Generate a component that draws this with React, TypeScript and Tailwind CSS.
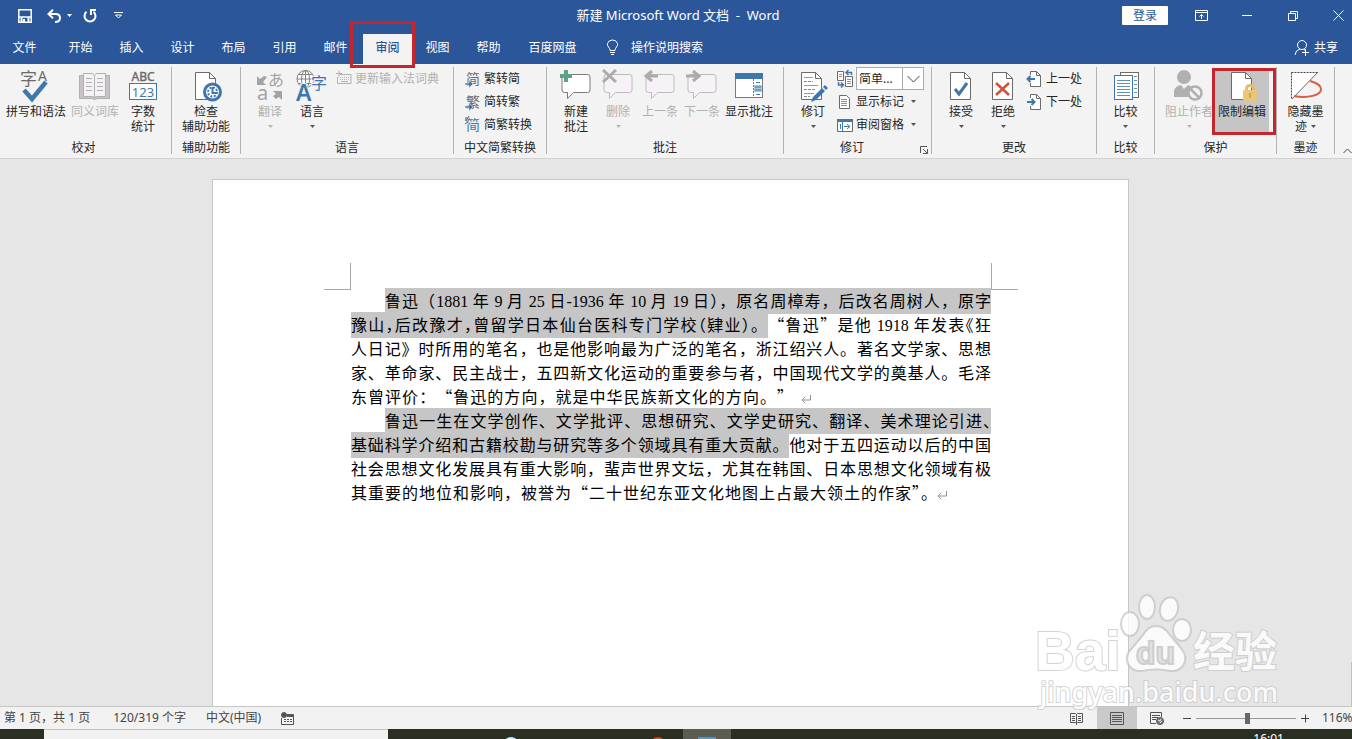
import type { ReactNode } from 'react';
import { clsx } from 'clsx';

const BLUE = '#3f77ad';
const GRAY = '#6b6b6b';
const MUTED = '#b1b1b1';

/* ---------- icons ---------- */

function Big({ children }: { children: ReactNode }) {
  return (
    <svg width="32" height="34" viewBox="0 0 32 34" fill="none" className="shrink-0 overflow-visible" aria-hidden="true">
      {children}
    </svg>
  );
}

function Small({ children }: { children: ReactNode }) {
  return (
    <svg width="16" height="16" viewBox="0 0 16 16" fill="none" className="shrink-0 overflow-visible" aria-hidden="true">
      {children}
    </svg>
  );
}

function Sheet() {
  return (
    <>
      <path d="M5.5 3.5h14l6 6v21h-20z" fill="#fff" stroke={GRAY} />
      <path d="M19.5 3.5v6h6" stroke={GRAY} />
    </>
  );
}

function SpellIcon() {
  return (
    <Big>
      <text x="0" y="16" fontSize="17" fill={GRAY}>字</text>
      <text x="18" y="12" fontSize="14" fill={GRAY}>A</text>
      <path d="M4 21l8 9 14-17" stroke={BLUE} strokeWidth="4.500" />
    </Big>
  );
}

function BookIcon() {
  return (
    <Big>
      <path d="M.5 6.500h4v-2h9l2 2 2-2h9v2h4v23h-12l-3 1-3-1h-12z" fill="#c9c3c9" stroke={MUTED} />
      <path d="M4.500 4.500h9l2 2v22l-2-1h-9zM26.500 4.500h-9l-2 2v22l2-1h9z" fill="#f6f1f6" stroke={MUTED} />
      <path d="M7 9.500h6M7 13.500h6M7 17.500h6M7 21.500h6M18 9.500h6M18 13.500h6M18 17.500h6M18 21.500h6" stroke={MUTED} />
    </Big>
  );
}

function CountIcon() {
  return (
    <Big>
      <text x="16" y="12" fontSize="12" textAnchor="middle" fill={GRAY} stroke={GRAY} strokeWidth="0.4">ABC</text>
      <rect x="2.500" y="14.500" width="27" height="16" fill="#fff" stroke={BLUE} />
      <text x="16" y="28" fontSize="13" textAnchor="middle" fill={BLUE}>123</text>
    </Big>
  );
}

function CheckAccessIcon() {
  return (
    <Big>
      <Sheet />
      <circle cx="22.500" cy="23" r="8" fill="#fff" stroke={BLUE} strokeWidth="3" />
      <circle cx="22.500" cy="23" r="4.500" stroke={BLUE} strokeWidth="2" strokeDasharray="2 1.500" />
      <path d="M22.500 18v6h5" stroke={BLUE} strokeWidth="2" />
    </Big>
  );
}

function TranslateIcon() {
  return (
    <Big>
      <path d="M3 7v9h9l-3-3 4-5-3-1-4 3z" fill="#a3a3a3" />
      <text x="14" y="17" fontSize="16" fill="#a3a3a3">あ</text>
      <text x="3" y="31" fontSize="20" fill="#a3a3a3">a</text>
      <path d="M19 22h9v9l-3-3-3 2-3-3 3-2z" fill="#a3a3a3" />
    </Big>
  );
}

function LanguageIcon() {
  return (
    <Big>
      <g stroke="#808080">
        <circle cx="9.500" cy="10" r="8.500" fill="#fff" />
        <ellipse cx="9.500" cy="10" rx="4" ry="8.500" />
        <path d="M1 10h17M2.500 5.500h14M2.500 14.500h14M9.500 1.500v17" />
      </g>
      <text x="0" y="32" fontSize="23" fontWeight="600" fill={BLUE} stroke="#f3f3f3" strokeWidth="2" style={{ paintOrder: 'stroke' }}>A</text>
      <text x="15" y="20" fontSize="16" fill={BLUE} stroke="#f3f3f3" strokeWidth="2" style={{ paintOrder: 'stroke' }}>字</text>
    </Big>
  );
}

function Balloon({ muted, children }: { muted?: boolean; children?: ReactNode }) {
  return (
    <Big>
      <path
        d="M4.500 5.500h23q2.500 0 2.500 2.500v13q0 2.500-2.500 2.500h-14l-6 6v-6h-3q-2.500 0-2.500-2.500v-13q0-2.500 2.500-2.500z"
        fill={muted ? '#f7f2f7' : '#fff'}
        stroke={muted ? '#bcbcbc' : '#7a7a7a'}
      />
      {children}
    </Big>
  );
}

function ShowCommentsIcon() {
  return (
    <Big>
      <rect x="2.500" y="4.500" width="27" height="24" fill="#fff" stroke="#7a7a7a" />
      <rect x="2" y="4" width="28" height="6" fill={BLUE} />
      <path d="M20.500 10v18" stroke="#7a7a7a" strokeDasharray="2 1" />
      <path d="M23 13.500h4M23 25.500h4" stroke={BLUE} />
      <path d="M21 16h8v7h-8z" fill="#a9c5e0" />
      <path d="M22 18h6M22 21h6" stroke={BLUE} />
    </Big>
  );
}

function TrackIcon() {
  return (
    <Big>
      <path d="M4.500 3.500h14l6 6v21h-20z" fill="#fff" stroke={GRAY} />
      <path d="M18.500 3.500v6h6" stroke={GRAY} />
      <path d="M7 8.500h9M7 16.500h14M7 24.500h10" stroke="#c58a75" />
      <path d="M7 12.500h9M7 20.500h12M7 27.500h6" stroke="#8a8a8a" strokeDasharray="3 1" />
      <path d="M14 33l2-5 9-9 3 3-9 9zM26 18l2-2 3 3-2 2z" fill={BLUE} />
    </Big>
  );
}

function AcceptIcon() {
  return (
    <Big>
      <Sheet />
      <path d="M10 20l4 5 8-11" stroke={BLUE} strokeWidth="3" />
    </Big>
  );
}

function RejectIcon() {
  return (
    <Big>
      <Sheet />
      <path d="M9 14l13 12M22 14L9 26" stroke="#cc5437" strokeWidth="2.500" />
    </Big>
  );
}

function CompareIcon() {
  return (
    <Big>
      <rect x="10.500" y="3.500" width="18" height="25" fill="#fff" stroke={GRAY} />
      <rect x="4.500" y="6.500" width="18" height="24" fill="#fff" stroke={BLUE} />
      <path d="M7 11.500h13M7 14.500h13M7 17.500h13M7 20.500h13M7 23.500h13M7 26.500h13" stroke="#5c93ab" />
      <path d="M24 7.500h3M24 11.500h3M24 15.500h3M24 19.500h3M24 23.500h3" stroke="#5c93ab" />
    </Big>
  );
}

function BlockAuthorsIcon() {
  return (
    <Big>
      <circle cx="11" cy="8" r="7" fill="#b0b0b0" />
      <path d="M1 28v-6q1-5 7-6l3 4 4-4q4 1 5 3l-5 9z" fill="#b0b0b0" />
      <circle cx="22" cy="24" r="6.500" fill="#f3f3f3" stroke="#b0b0b0" strokeWidth="2.500" />
      <path d="M17 19.500l9.500 9.500" stroke="#b0b0b0" strokeWidth="2.500" />
    </Big>
  );
}

function RestrictIcon() {
  return (
    <Big>
      <Sheet />
      <path d="M20.500 22v-2q0-3.500 3.500-3.500t3.500 3.500v2" stroke="#e3bd70" strokeWidth="3" />
      <rect x="17" y="21" width="14" height="12" rx="1" fill="#ebc57b" />
      <path d="M24 24v5" stroke="#d4a54f" strokeWidth="2" />
    </Big>
  );
}

function HideInkIcon() {
  return (
    <Big>
      <path d="M1 3h27L1 30z" fill="#fff" />
      <path d="M1.500 3.500h26M1.500 3.500v26" stroke="#444" strokeDasharray="2 1" />
      <path d="M28 3L2 30" stroke={GRAY} />
      <path d="M20 12q11 3 11 8 0 7-17 8-6 0-10-1" stroke="#cf6245" strokeWidth="2" />
    </Big>
  );
}

function ConvertIcon({ glyph, color, arrow = true }: { glyph: string; color: string; arrow?: boolean }) {
  return (
    <Small>
      <text x="1" y="13" fontSize="14" fill={color}>{glyph}</text>
      {arrow ? (
        <path d="M0 12h4v-3l4 4-4 4v-3H0z" fill={BLUE} stroke="#f3f3f3" strokeWidth="0.500" />
      ) : (
        <path d="M1 0v4M4-1l-3 5M0 7l3-2" stroke="#555" />
      )}
    </Small>
  );
}

function KeyboardIcon() {
  return (
    <Small>
      <path d="M4 3.500h11v9H1.500V6" stroke={MUTED} />
      <path d="M3-.5v6M0 2.500h6" stroke={MUTED} />
      <path d="M4 6.500h9M4 8.500h9" stroke={MUTED} strokeDasharray="1 1" />
      <path d="M5 10.500h7" stroke={MUTED} />
    </Small>
  );
}

function DisplayIcon() {
  return (
    <Small>
      <path d="M.5.5h6v9h-6zM8.500 5.500h7v10h-7z" fill="#fff" stroke={GRAY} />
      <path d="M2 3.500h3M2 5.500h3M10 8.500h4M10 10.500h4M10 12.500h4" stroke="#bd7d66" />
      <path d="M1.500 11v3h5M4 11.500L6.500 14 4 16.500M14.500 4V1.500H9M11.500-1L9 1.500 11.500 4" stroke={BLUE} strokeWidth="1.500" />
    </Small>
  );
}

function MarkupIcon() {
  return (
    <Small>
      <path d="M2.500 1.500h7l3 3v10h-10z" fill="#fff" stroke={GRAY} />
      <path d="M4 5.500h6M4 7.500h6M4 9.500h6M4 11.500h6" stroke="#bd7d66" />
    </Small>
  );
}

function PaneIcon() {
  return (
    <Small>
      <path d="M.5 2.500h15v12H.5z" fill="#fff" stroke={GRAY} />
      <path d="M0 2h16v3H0z" fill={BLUE} />
      <path d="M5.500 5v9M3.500 7v5M7 9.500h5M10 7l3 2.500-3 2.500" stroke={BLUE} />
    </Small>
  );
}

function StepIcon({ next }: { next?: boolean }) {
  return (
    <Small>
      <path d="M3.500 .5h6l4 4v11h-10z" fill="#fff" />
      <path d="M3.500 4V.5h6l4 4v11h-10V12M9.500 .5v4h4" stroke={GRAY} />
      <path d={next ? 'M0 8h7M4.500 5l3 3-3 3' : 'M8 8H1M3.500 5l-3 3 3 3'} stroke={BLUE} strokeWidth="2" />
    </Small>
  );
}

function Caret({ muted }: { muted?: boolean }) {
  return (
    <svg width="5" height="3" viewBox="0 0 5 3" className="inline-block shrink-0" aria-hidden="true">
      <path d="M0 0h5L2.500 3z" fill={muted ? '#b5b5b5' : '#555'} />
    </svg>
  );
}

/* ---------- ribbon ---------- */

interface GroupProps {
  label: string;
  className: string;
  inner?: string;
  launcher?: boolean;
  children: ReactNode;
}

function Group({ label, className, inner, launcher, children }: GroupProps) {
  return (
    <section className={clsx('flex h-[87px] shrink-0 flex-col border-r border-[#b3b3b3]', className)}>
      <div className={clsx('flex h-[73px] shrink-0 items-start', inner)}>{children}</div>
      <div className={clsx('flex h-4 items-center justify-center leading-4', launcher && 'pr-[3px]')}>
        <span className="flex-1 text-center">{label}</span>
        {launcher && (
          <button aria-label="修订选项" className="mt-1">
            <svg width="8" height="8" viewBox="0 0 8 8" fill="none" stroke="#555">
              <path d="M.5 7V.5H7M3 3l4 4M7.500 3v4.500H3" />
            </svg>
          </button>
        )}
      </div>
    </section>
  );
}

interface BigButtonProps {
  icon: ReactNode;
  lines: string[];
  className?: string;
  caret?: boolean;
  muted?: boolean;
}

function BigButton({ icon, lines, className = 'w-[42px]', caret, muted }: BigButtonProps) {
  return (
    <button
      className={clsx('mt-0.5 flex h-[66px] shrink-0 flex-col items-center leading-[15px] whitespace-nowrap', muted ? 'text-[#b1b1b1]' : 'text-[#262626]', className)}
    >
      {icon}
      <span className="pt-px">
        {lines.map((line, i) => (
          <span key={line} className="block">
            {line}
            {caret && i === 1 && <span className="inline-flex pb-0.5 pl-1 align-middle"><Caret /></span>}
          </span>
        ))}
      </span>
      {caret && lines.length === 1 && <span className="flex h-[15px] items-center"><Caret muted={muted} /></span>}
    </button>
  );
}

function RowButton({ icon, label, muted, caret }: { icon: ReactNode; label: string; muted?: boolean; caret?: boolean }) {
  return (
    <button className={clsx('flex h-[23px] items-center gap-[3px] whitespace-nowrap', muted ? 'text-[#b1b1b1]' : 'text-[#262626]')}>
      {icon}
      <span>{label}</span>
      {caret && <span className="flex pl-1"><Caret /></span>}
    </button>
  );
}

function Ribbon() {
  return (
    <div className="flex h-[95px] shrink-0 items-start border-b border-[#d2d2d2] bg-[#f3f3f3] pt-[3px] text-[#262626]">
      <Group label="校对" className="w-[172px] pr-1" inner="pl-1">
        <BigButton className="w-16" icon={<SpellIcon />} lines={['拼写和语法']} />
        <BigButton className="w-[54px]" icon={<BookIcon />} lines={['同义词库']} muted />
        <BigButton icon={<CountIcon />} lines={['字数', '统计']} />
      </Group>
      <Group label="辅助功能" className="w-[69px]">
        <BigButton className="w-[68px]" icon={<CheckAccessIcon />} lines={['检查', '辅助功能']} />
      </Group>
      <Group label="语言" className="w-[213px]" inner="pl-2">
        <BigButton icon={<TranslateIcon />} lines={['翻译']} caret muted />
        <BigButton icon={<LanguageIcon />} lines={['语言']} caret />
        <div className="pl-[3px]">
          <RowButton icon={<KeyboardIcon />} label="更新输入法词典" muted />
        </div>
      </Group>
      <Group label="中文简繁转换" className="w-[93px]" inner="pl-[11px]">
        <div>
          <RowButton icon={<ConvertIcon glyph="简" color={GRAY} />} label="繁转简" />
          <RowButton icon={<ConvertIcon glyph="繁" color={GRAY} />} label="简转繁" />
          <RowButton icon={<ConvertIcon glyph="简" color={BLUE} arrow={false} />} label="简繁转换" />
        </div>
      </Group>
      <Group label="批注" className="w-[237px]" inner="pl-2">
        <BigButton
          icon={
            <Balloon>
              <path d="M4 1h4v4h4v4H8v4H4V9H0V5h4z" fill="#5ba287" />
            </Balloon>
          }
          lines={['新建', '批注']}
        />
        <BigButton
          icon={
            <Balloon muted>
              <path d="M1 1l13 12M14 1L1 13" stroke="#ababab" strokeWidth="3" />
            </Balloon>
          }
          lines={['删除']}
          caret
          muted
        />
        <BigButton
          icon={
            <Balloon muted>
              <path d="M14 7H3M8 2L2 7l6 5" stroke="#ababab" strokeWidth="3" />
            </Balloon>
          }
          lines={['上一条']}
          muted
        />
        <BigButton
          icon={
            <Balloon muted>
              <path d="M0 7h12M7 2l6 5-6 5" stroke="#ababab" strokeWidth="3" />
            </Balloon>
          }
          lines={['下一条']}
          muted
        />
        <BigButton className="w-[52px]" icon={<ShowCommentsIcon />} lines={['显示批注']} />
      </Group>
      <Group label="修订" className="w-[148px]" inner="pl-2" launcher>
        <BigButton icon={<TrackIcon />} lines={['修订']} caret />
        <div className="pl-[3px]">
          <div className="flex h-[23px] items-center gap-[3px]">
            <DisplayIcon />
            <div className="relative">
              <select aria-label="显示以供审阅" className="block h-[23px] w-[68px] appearance-none border border-[#ababab] bg-white pl-0.5 text-[12px] leading-none text-[#262626]">
                <option>简单...</option>
              </select>
              <span className="pointer-events-none absolute inset-y-0 right-0 flex w-[22px] items-center justify-center border-l border-[#ababab]">
                <svg width="13" height="8" viewBox="0 0 13 8" fill="none" stroke="#444">
                  <path d="M.5 1l6 6 6-6" />
                </svg>
              </span>
            </div>
          </div>
          <RowButton icon={<MarkupIcon />} label="显示标记" caret />
          <RowButton icon={<PaneIcon />} label="审阅窗格" caret />
        </div>
      </Group>
      <Group label="更改" className="w-[165px]" inner="pl-2">
        <BigButton icon={<AcceptIcon />} lines={['接受']} caret />
        <BigButton icon={<RejectIcon />} lines={['拒绝']} caret />
        <div className="pl-[3px]">
          <RowButton icon={<StepIcon />} label="上一处" />
          <RowButton icon={<StepIcon next />} label="下一处" />
        </div>
      </Group>
      <Group label="比较" className="w-[58px]">
        <BigButton className="w-[57px]" icon={<CompareIcon />} lines={['比较']} caret />
      </Group>
      <Group label="保护" className="w-[122px]" inner="pl-2">
        <BigButton className="w-[52px]" icon={<BlockAuthorsIcon />} lines={['阻止作者']} caret muted />
        <div className="relative">
          <BigButton className="w-[54px] bg-[#c5c5c5]" icon={<RestrictIcon />} lines={['限制编辑']} />
          <div className="pointer-events-none absolute top-px bottom-0 -left-[3px] w-16 border-3 border-[#c4262e]" />
        </div>
      </Group>
      <Group label="墨迹" className="w-[58px]">
        <BigButton className="w-[57px]" icon={<HideInkIcon />} lines={['隐藏墨', '迹']} caret />
      </Group>
      <button aria-label="折叠功能区" className="mb-1 ml-auto self-end">
        <svg width="9" height="6" viewBox="0 0 9 6" fill="none" stroke="#444">
          <path d="M.5 5l4-4 4 4" />
        </svg>
      </button>
    </div>
  );
}

/* ---------- title bar and tabs ---------- */

const tabs = ['开始', '插入', '设计', '布局', '引用', '邮件', '审阅', '视图', '帮助'];

function TitleBar() {
  return (
    <div className="grid h-[31px] grid-cols-[1fr_auto_1fr] items-center">
      <div className="flex items-center pl-[18px]">
        <button aria-label="保存">
          <svg width="14" height="14" viewBox="0 0 14 14" fill="none" stroke="#fff" strokeWidth="1.500">
            <path d="M.8.8h12.400v12.400H.8zM1 8h12" />
            <path d="M3.500 8v5M10.500 8v5M6 13v-3" strokeWidth="2" />
          </svg>
        </button>
        <button aria-label="撤消" className="ml-[15px]">
          <svg width="15" height="14" viewBox="0 0 15 14" fill="none" stroke="#fff" strokeWidth="2">
            <path d="M2 5h6.500q4.500 0 4.500 4t-5 4M6 .8L1.500 5 6 9.200" />
          </svg>
        </button>
        <button aria-label="撤消列表" className="ml-[5px]">
          <svg width="5" height="3" viewBox="0 0 5 3"><path d="M0 0h5L2.500 3z" fill="#fff" /></svg>
        </button>
        <button aria-label="重复" className="ml-[11px]">
          <svg width="14" height="15" viewBox="0 0 14 15" fill="none" stroke="#fff" strokeWidth="2">
            <path d="M10.500 3.800A5.500 5.500 0 1 1 3.500 3.800M8 7V2h5" />
          </svg>
        </button>
        <button aria-label="自定义快速访问工具栏" className="ml-[17px]">
          <svg width="9" height="7" viewBox="0 0 9 7" fill="none" stroke="#fff"><path d="M0 .5h9M1.500 3l3 3 3-3z" /></svg>
        </button>
      </div>
      <h1 className="pb-0.5 pl-1 text-[13px] leading-5 whitespace-pre">新建 Microsoft Word 文档  -  Word</h1>
      <div className="flex items-center justify-end">
        <button className="mr-2.5 h-[19px] w-[46px] rounded-[1px] bg-white leading-[19px] text-[#2b579a]">登录</button>
        <button aria-label="功能区显示选项" className="flex w-[46px] justify-center">
          <svg width="13" height="11" viewBox="0 0 13 11" fill="none" stroke="#fff"><path d="M.5.5h12v10H.5zM1 2.500h11M6.500 9V4.500M4.500 6.500l2-2 2 2" /></svg>
        </button>
        <button aria-label="最小化" className="flex w-[46px] justify-center">
          <svg width="10" height="11" viewBox="0 0 10 11" stroke="#fff"><path d="M0 5.500h10" /></svg>
        </button>
        <button aria-label="还原" className="flex w-[46px] justify-center">
          <svg width="10" height="10" viewBox="0 0 10 10" fill="none" stroke="#fff"><path d="M.5 2.500h7v7h-7zM2.500 2.500v-2h7v7h-2" /></svg>
        </button>
        <button aria-label="关闭" className="flex w-9 justify-end pr-2">
          <svg width="11" height="11" viewBox="0 0 11 11" stroke="#fff"><path d="M.5.5l10 10M10.500.5l-10 10" /></svg>
        </button>
      </div>
    </div>
  );
}

function TabBar() {
  return (
    <nav className="flex h-[33px] items-end">
      <button className="h-[33px] w-[55px] pr-1.5">文件</button>
      {tabs.map((tab) => {
        const active = tab === '审阅';
        return (
          <button key={tab} className={clsx('relative', active ? 'ml-0.5 h-[30px] w-[49px] bg-[#f3f3f3] pb-[3px] font-medium text-[#2b579a]' : 'h-[33px] w-[51px]')}>
            {tab}
            {active && <span className="pointer-events-none absolute -top-[13px] -left-[13px] z-10 h-[47px] w-[65px] border-3 border-[#c4262e]" />}
          </button>
        );
      })}
      <button className="h-[33px] w-[77px]">百度网盘</button>
      <button className="ml-[15px] flex h-[33px] items-center gap-3">
        <svg width="13" height="17" viewBox="0 0 13 17" fill="none" stroke="#fff">
          <path d="M4 11.500q0-2-1.500-3.500Q1 6.500 1.500 4.500 2.500 1 6.500 1t5 3.500q.5 2-1 3.500Q9 9.500 9 11.500zM4 13.500h5M5 15.500h3" />
        </svg>
        操作说明搜索
      </button>
      <button className="mr-3.5 ml-auto flex h-[33px] items-center gap-1">
        <svg width="16" height="17" viewBox="0 0 16 17" fill="none" stroke="#fff">
          <circle cx="8" cy="6" r="4.500" />
          <path d="M1 16q.5-5 5-6M9.500 10.300l1.500 1M8 13.500h7M11.500 10v7" />
        </svg>
        共享
      </button>
    </nav>
  );
}

/* ---------- document ---------- */

function Line({ className, children }: { className?: string; children: ReactNode }) {
  return (
    <span className={clsx('flex h-6', className)}>
      <span className="block flex-1 text-justify whitespace-nowrap [text-align-last:justify]">{children}</span>
    </span>
  );
}

function Selected({ children }: { children: ReactNode }) {
  return <mark className="bg-[#c6c6c6] pb-0.5 text-inherit">{children}</mark>;
}

// Half-width punctuation
function Half({ children }: { children: ReactNode }) {
  return <span className="[font-feature-settings:'halt']">{children}</span>;
}

function Num({ children }: { children: ReactNode }) {
  return <span className="font-['Liberation_Serif',serif]">{children}</span>;
}

function ReturnMark() {
  return (
    <svg width="11" height="10" viewBox="0 0 11 10" fill="none" stroke="#909090" className="mt-2.5 ml-2" aria-hidden="true">
      <path d="M9.500 1v5H1M4 3L1 6l3 3" />
    </svg>
  );
}

function Document() {
  return (
    <main className="relative flex min-h-0 flex-1 justify-center overflow-hidden bg-[#e6e6e6] pt-5 pr-[11px]">
      <article className="w-[917px] border border-b-0 border-[#c6c6c6] bg-white pt-[83px] pr-[137px] pl-[138px]">
        <div className="-mx-[27px] flex h-[27px] justify-between">
          <span className="w-[27px] border-r border-b border-[#a8a8a8]" />
          <span className="w-[27px] border-b border-l border-[#a8a8a8]" />
        </div>
        <div className="-mt-0.5 font-['Noto_Sans_CJK_SC',sans-serif] text-[16px] leading-6 text-black [text-spacing-trim:space-all]">
          <p>
            <Line className="ml-[34px]">
              <Selected>
                鲁迅（<Num>1881</Num> 年 <Num>9</Num> 月 <Num>25</Num> 日<Num>-1936</Num> 年 <Num>10</Num> 月 <Num>19</Num> 日<Half>）</Half>，原名周樟寿，后改名周树人，原字
              </Selected>
            </Line>
            <Line>
              <Selected>
                豫山<Half>，</Half>后改豫才<Half>，</Half>曾留学日本仙台医科专门学校<Half>（</Half>肄业<Half>）</Half>。
              </Selected>
              “鲁迅”是他 <Num>1918</Num> 年发表<Half>《</Half>狂
            </Line>
            <Line>人日记》时所用的笔名，也是他影响最为广泛的笔名，浙江绍兴人。著名文学家、思想</Line>
            <Line>家、革命家、民主战士，五四新文化运动的重要参与者，中国现代文学的奠基人。毛泽</Line>
            <span className="flex">
              <Line className="w-[442px]">东曾评价：“鲁迅的方向，就是中华民族新文化的方向。”</Line>
              <ReturnMark />
            </span>
          </p>
          <p>
            <Line className="ml-[34px]">
              <Selected>
                鲁迅一生在文学创作、文学批评、思想研究、文学史研究、翻译、美术理论引进<Half>、</Half>
              </Selected>
            </Line>
            <Line><Selected>基础科学介绍和古籍校勘与研究等多个领域具有重大贡献。</Selected>他对于五四运动以后的中国</Line>
            <Line>社会思想文化发展具有重大影响，蜚声世界文坛，尤其在韩国、日本思想文化领域有极</Line>
            <span className="flex">
              <Line className="w-[578px]">
                其重要的地位和影响，被誉为“二十世纪东亚文化地图上占最大领土的作家<Half>”。</Half>
              </Line>
              <ReturnMark />
            </span>
          </p>
        </div>
      </article>
      <div className="absolute right-0 bottom-0 h-11 w-px bg-[#c0c0c0]" />
    </main>
  );
}

function Watermark() {
  return (
    <svg
      width="260"
      height="130"
      viewBox="0 0 260 130"
      className="pointer-events-none absolute right-[62px] bottom-[19px] opacity-80"
      fill="#fff"
      stroke="#c9c9c9"
      strokeWidth="2"
      aria-hidden="true"
    >
      <g fontFamily="'Liberation Sans', 'Noto Sans CJK SC', sans-serif" fontWeight="700">
        <text x="5" y="80" fontSize="55" style={{ paintOrder: 'stroke' }}>Bai</text>
        <text x="163" y="77" fontSize="42" style={{ paintOrder: 'stroke' }}>经验</text>
      </g>
      <ellipse cx="100" cy="34" rx="9" ry="12" />
      <ellipse cx="117" cy="17" rx="8" ry="12" />
      <ellipse cx="139" cy="19" rx="9" ry="12" transform="rotate(15 139 19)" />
      <ellipse cx="152" cy="40" rx="9" ry="11" />
      <path d="M126 36q8 0 14 9l11 13q7 9 3 16-4 8-14 7-14-3-28 0-10 1-14-7-4-9 5-17l10-12q5-9 13-9z" />
      <text x="106" y="74" fontSize="32" fill="#e2e2e2" fontFamily="'Liberation Sans', sans-serif" fontWeight="700">du</text>
      <text x="10" y="112" fontSize="27" fontFamily="'Noto Sans', sans-serif" fontWeight="500" style={{ paintOrder: 'stroke' }}>jingyan.baidu.com</text>
    </svg>
  );
}

/* ---------- status bar ---------- */

function StatusBar() {
  return (
    <footer className="flex h-[23px] shrink-0 items-center border-t border-[#c6c6c6] bg-[#f2f2f2] pl-1 whitespace-nowrap text-[#444]">
      <button>第 1 页，共 1 页</button>
      <button className="ml-[23px]">120/319 个字</button>
      <button className="ml-5">中文(中国)</button>
      <button aria-label="宏录制" className="ml-5">
        <svg width="13" height="13" viewBox="0 0 13 13" fill="none" stroke="#555">
          <path d="M5 2.500h7.500v10h-12V6" />
          <circle cx="3" cy="3" r="2.500" fill="#555" />
          <path d="M6 4h6" strokeWidth="2" />
          <path d="M3 7.500h8M3 9.500h8" strokeDasharray="2 1" />
        </svg>
      </button>
      <div className="ml-auto flex h-full items-center">
        <button aria-label="阅读视图" className="mr-3.5">
          <svg width="13" height="13" viewBox="0 0 13 13" fill="none" stroke="#555">
            <path d="M.5 1.500h5l1 1 1-1h5v9h-5l-1 1-1-1h-5zM6.500 2v11M2 4.500h3M2 6.500h3M2 8.500h3M8 4.500h3M8 6.500h3M8 8.500h3" />
          </svg>
        </button>
        <button aria-label="页面视图" className="flex h-full w-10 items-center justify-center bg-[#c9c9c9]">
          <svg width="14" height="13" viewBox="0 0 14 13" fill="none" stroke="#555">
            <path d="M.5.5h13v12H.5zM2 3.500h10M2 5.500h10M2 7.500h10M2 9.500h10" />
          </svg>
        </button>
        <button aria-label="Web 版式视图" className="ml-[13px]">
          <svg width="14" height="13" viewBox="0 0 14 13" fill="none" stroke="#555">
            <path d="M6 11.500H.5V.5h11V5M2 3.500h8M2 5.500h6M2 7.500h4" />
            <circle cx="10" cy="9" r="3.500" fill="#777" />
            <path d="M8 8l2 1 1-2M10 11l2-2" stroke="#f2f2f2" />
          </svg>
        </button>
        <button aria-label="缩小" className="ml-[19px]">
          <svg width="8" height="9" viewBox="0 0 8 9" stroke="#444"><path d="M0 4.500h8" /></svg>
        </button>
        <input
          type="range"
          aria-label="显示比例"
          min={0}
          max={100}
          defaultValue={52}
          className="mx-[5px] h-px w-[100px] appearance-none bg-[#999] [&::-webkit-slider-thumb]:h-[11px] [&::-webkit-slider-thumb]:w-[5px] [&::-webkit-slider-thumb]:appearance-none [&::-webkit-slider-thumb]:bg-[#666]"
        />
        <button aria-label="放大">
          <svg width="8" height="9" viewBox="0 0 8 9" stroke="#444"><path d="M0 4.500h8M4.500 .5v8" /></svg>
        </button>
        <button className="ml-[13px] w-[30px] text-left">116%</button>
      </div>
    </footer>
  );
}

function Taskbar() {
  return (
    <div className="flex h-2.5 shrink-0 items-start overflow-hidden bg-[#2b2e22]">
      <div className="ml-11 h-full w-[344px] border-t border-[#c0c0c0] bg-[#f1f1f1]" />
      <span className="mt-2 ml-[115px] size-4 rounded-full border-2 border-[#cfe8f2] bg-[#4d9ac0]" />
      <span className="mt-2 ml-[131px] size-4 rounded-full bg-[#c64a35]" />
      <span className="ml-[17px] flex h-full w-12 justify-center bg-[#5b5d52] pt-2">
        <span className="h-2 w-[18px] bg-[#4a96cf]" />
      </span>
      <time className="mt-[3px] mr-[68px] ml-auto text-[12px] leading-[14px] text-white">16:01</time>
    </div>
  );
}

export default function App() {
  return (
    <div className="relative flex h-screen flex-col overflow-hidden font-['Noto_Sans','Noto_Sans_CJK_SC',sans-serif] text-[12px]">
      <header className="shrink-0 bg-[#2b579a] text-white">
        <TitleBar />
        <TabBar />
      </header>
      <Ribbon />
      <Document />
      <StatusBar />
      <Taskbar />
      <Watermark />
    </div>
  );
}
